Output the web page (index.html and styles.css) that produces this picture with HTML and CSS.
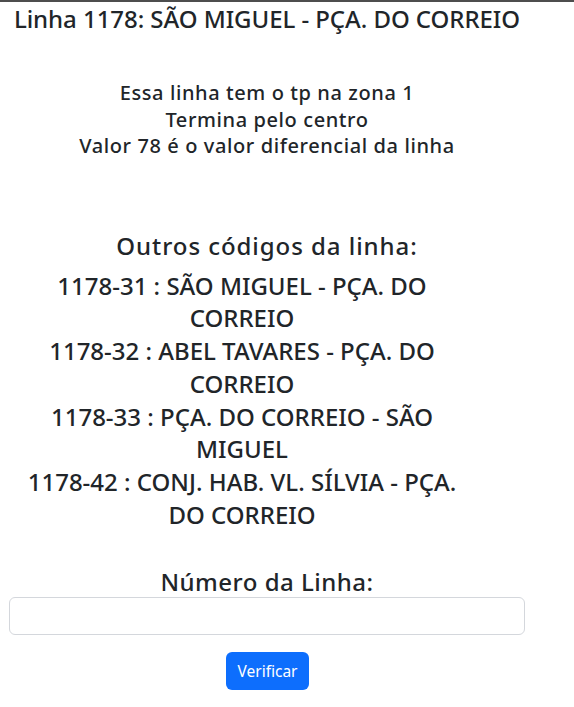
FILE: index.html
```html
<!DOCTYPE html>
<html lang="pt-BR">
<head>
<meta charset="utf-8">
<title>Linha 1178</title>
<link rel="stylesheet" href="styles.css">
</head>
<body>
<main class="page">
  <h1 class="title">Linha 1178: SÃO MIGUEL - PÇA. DO CORREIO</h1>
  <div class="info">
    <p>Essa linha tem o tp na zona 1</p>
    <p>Termina pelo centro</p>
    <p>Valor 78 é o valor diferencial da linha</p>
  </div>
  <h2 class="others-title">Outros códigos da linha:</h2>
  <ul class="codes">
    <li>1178-31 : SÃO MIGUEL - PÇA. DO CORREIO</li>
    <li>1178-32 : ABEL TAVARES - PÇA. DO CORREIO</li>
    <li>1178-33 : PÇA. DO CORREIO - SÃO MIGUEL</li>
    <li>1178-42 : CONJ. HAB. VL. SÍLVIA - PÇA. DO CORREIO</li>
  </ul>
  <form class="search">
    <label class="search-label" for="numero">Número da Linha:</label>
    <input class="search-input" id="numero" type="text">
    <button class="btn-primary" type="button">Verificar</button>
  </form>
</main>
</body>
</html>
```
FILE: styles.css
```css
html, body {
  margin: 0;
  padding: 0;
  background: #fff;
}
body {
  border-top: 2px solid #4d4d4d;
  font-family: "Noto Sans", "Open Sans", sans-serif;
  color: #212529;
}
.page {
  width: 516px;
  margin-left: 9px;
  text-align: center;
}
.title {
  margin: 1px 0 0;
  font-size: 24px;
  font-weight: 500;
  line-height: 32px;
  letter-spacing: -0.05px;
}
.info {
  margin-top: 45px;
  font-size: 20px;
  font-weight: 500;
  line-height: 26.6px;
  letter-spacing: 0.6px;
}
.info p {
  margin: 0;
}
.others-title {
  margin: 70px 0 0;
  font-size: 24px;
  font-weight: 500;
  line-height: 32px;
  letter-spacing: 0.95px;
}
.codes {
  list-style: none;
  margin: 8px 0 0 13px;
  padding: 0;
  width: 440px;
  font-size: 24px;
  font-weight: 500;
  line-height: 32.7px;
}
.search {
  display: flex;
  flex-direction: column;
  align-items: center;
  margin-top: 36px;
}
.search-label {
  font-size: 24px;
  font-weight: 500;
  line-height: 30px;
  letter-spacing: 0.5px;
}
.search-input {
  box-sizing: border-box;
  width: 516px;
  height: 38px;
  margin: 0;
  border: 1px solid #d4d7dc;
  border-radius: 6px;
  font: inherit;
  font-size: 16px;
  padding: 6px 12px;
}
.btn-primary {
  box-sizing: border-box;
  margin-top: 17px;
  height: 38px;
  width: 83px;
  padding: 0 12px;
  border: none;
  border-radius: 6px;
  background: #0d6efd;
  color: #fff;
  font-family: inherit;
  font-size: 15.5px;
}
```
